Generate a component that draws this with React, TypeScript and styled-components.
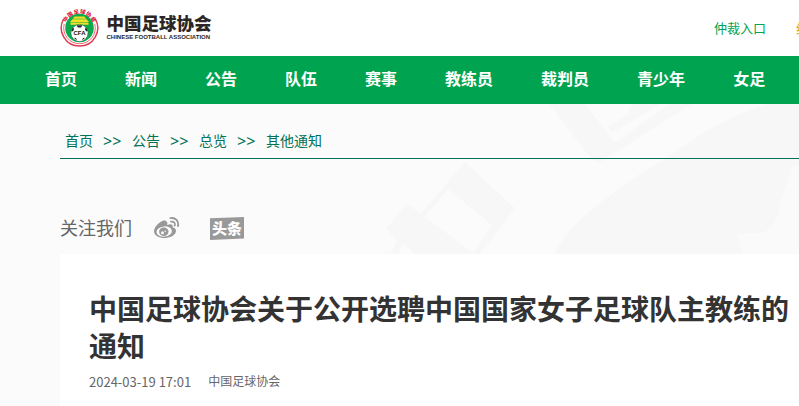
import React from "react";
import styled, { createGlobalStyle } from "styled-components";

const GlobalStyle = createGlobalStyle`
  * { box-sizing: border-box; }
  body {
    margin: 0;
    background: #fbfbfb;
    color: #333;
    font-family: "Noto Sans", "Noto Sans CJK SC", sans-serif;
    font-size: 14px;
    overflow-x: hidden;
  }
  a { color: inherit; text-decoration: none; }
`;

const Page = styled.div`
  min-height: 100vh;
  display: flex;
  flex-direction: column;
  overflow: hidden;
`;

const Header = styled.header`
  display: flex;
  align-items: center;
  justify-content: space-between;
  height: 56px;
  padding-left: 60px;
  background: #fff;
`;

const Brand = styled.a`
  display: flex;
  flex: none;
  svg { display: block; }
`;

const TopLinks = styled.nav`
  display: flex;
  flex: none;
  gap: 30px;
  width: 85px;
  font-size: 13px;
  line-height: 20px;
  white-space: nowrap;
`;

const TopLink = styled.a<{ $tone: string }>`
  flex: none;
  color: ${(p) => p.$tone};
`;

const MainNav = styled.nav`
  display: flex;
  height: 48px;
  padding-left: 21px;
  background: #00a450;
`;

const NavLink = styled.a`
  flex: none;
  padding: 0 24px;
  color: #fff;
  font-size: 16px;
  font-weight: 700;
  line-height: 46px;
`;

const Main = styled.main`
  position: relative;
  flex: 1;
  display: flex;
  flex-direction: column;
  padding-left: 60px;
`;

const Watermark = styled.svg`
  position: absolute;
  top: 0;
  left: 380px;
  width: 419px;
  height: 150px;
`;

const Breadcrumb = styled.nav`
  position: relative;
  display: flex;
  align-items: center;
  gap: 10px;
  height: 55px;
  padding: 20px 5px 0;
  border-bottom: 1px solid #007257;
  color: #007257;
  line-height: 20px;
`;

const Separator = styled.span`
  min-width: 19px;
  font-size: 16px;
`;

const Follow = styled.div`
  position: relative;
  display: flex;
  align-items: center;
  height: 95px;
  padding-top: 43px;
  color: #666;
  font-size: 18px;
  line-height: 24px;
`;

const SocialLink = styled.a<{ $gap: number }>`
  margin-left: ${(p) => p.$gap}px;
  svg { display: block; }
`;

const Article = styled.article`
  position: relative;
  flex: 1;
  padding: 37px 0 14px 29px;
  background: #fff;
`;

const Title = styled.h1`
  margin: 0;
  font-size: 28px;
  font-weight: 700;
  line-height: 37px;
`;

const Meta = styled.div`
  display: flex;
  align-items: center;
  gap: 17px;
  margin-top: 7px;
  color: #666;
  font-size: 12px;
  line-height: 20px;
`;

const Time = styled.time`
  font-family: "Noto Sans CJK SC", sans-serif;
  font-size: 13px;
`;

const ringText = Array.from("中国足球协会");

function Logo() {
  return (
    <svg width="152" height="40" viewBox="0 0 152 40" role="img" aria-label="中国足球协会">
      <path d="M3.600 11A18.200 18.200 0 1 0 35.400 11" fill="none" stroke="#e23a52" strokeWidth="1.500" />
      <path d="M4.200 16A15.800 15.800 0 1 0 34.800 16" fill="none" stroke="#ea6a7b" strokeWidth="1" />
      {ringText.map((ch, i) => (
        <text
          key={ch}
          x="19.500"
          y="5.600"
          textAnchor="middle"
          fontFamily="Noto Sans CJK SC, sans-serif"
          fontSize="5.500"
          fontWeight="900"
          fill="#dc1f3c"
          transform={`rotate(${-57.5 + i * 23} 19.5 20)`}
        >
          {ch}
        </text>
      ))}
      <circle cx="19.500" cy="20" r="14.300" fill="#0ba84c" />
      <path d="M14.500 8.600h10l1.600 2.200h-13.200zM12.500 11.300h14l2.500 2.700h-19zM10.500 14.600h18v2.200h-18z" fill="#f0e126" />
      <circle cx="19.500" cy="25" r="8.600" fill="#fff" stroke="#176b3c" strokeWidth=".6" />
      <path d="M16.800 17.200h5.400l-1 2.300h-3.400zM11.300 22.500l1.800-3 1 1.500-1.200 2.500zM27.700 22.500l-1.800-3-1 1.500 1.200 2.500zM14 29.800l2 .2 1 2.700zM25 29.800l-2 .2-1 2.700z" fill="#222" />
      <text x="19.500" y="27.300" textAnchor="middle" fontFamily="Liberation Sans, sans-serif" fontSize="6" fontWeight="700" fill="#111">CFA</text>
      <text x="46.500" y="21.500" fontFamily="Noto Sans CJK SC, sans-serif" fontSize="17.500" fontWeight="900" fill="#2b2523">中国足球协会</text>
      <text x="46.500" y="31" fontFamily="Liberation Sans, sans-serif" fontSize="6" fontWeight="700" fill="#2b2523">CHINESE FOOTBALL ASSOCIATION</text>
    </svg>
  );
}

function WeiboIcon() {
  return (
    <svg width="26" height="22" viewBox="0 0 26 22" fill="none" aria-hidden="true">
      <path d="M10 3.500C7 3.500 0 9.500 0 14.200 0 18.500 5 21 10.500 21c7 0 11.500-3.800 11.500-7 0-2-1.500-3.200-3.400-3.700.7-2.300-.8-4.200-5.400-2.300C14 5 12.500 3.500 10 3.500z" fill="#999" />
      <ellipse cx="10.200" cy="14.500" rx="7.700" ry="5.100" fill="#fbfbfb" transform="rotate(-6 10.200 14.500)" />
      <ellipse cx="9.800" cy="14.800" rx="4.700" ry="4.200" fill="#999" />
      <circle cx="8.500" cy="15.800" r="1.500" fill="#fbfbfb" />
      <circle cx="11.300" cy="14.200" r=".7" fill="#fbfbfb" />
      <path d="M16.500 1.200c4.800-1 8.800 3 7.400 8M17 4.700c2.500-.6 4.500 1.400 3.700 3.900" stroke="#999" strokeWidth="1.800" strokeLinecap="round" />
    </svg>
  );
}

function ToutiaoIcon() {
  return (
    <svg width="34" height="23" viewBox="0 0 34 23" aria-hidden="true">
      <path d="M0 1.200L34 0v21.500L0 23z" fill="#999" />
      <text x="17" y="17" textAnchor="middle" fontFamily="Noto Sans CJK SC, sans-serif" fontSize="15" fontWeight="900" fill="#fff">头条</text>
    </svg>
  );
}

const navItems = ["首页", "新闻", "公告", "队伍", "赛事", "教练员", "裁判员", "青少年", "女足"];
const crumbs = ["首页", "公告", "总览", "其他通知"];

export default function App() {
  return (
    <Page lang="zh-CN">
      <GlobalStyle />
      <Header>
        <Brand href="#home"><Logo /></Brand>
        <TopLinks aria-label="快捷入口">
          <TopLink href="#arbitration" $tone="#00a450">仲裁入口</TopLink>
          <TopLink href="#discipline" $tone="#e0a82e">纪律</TopLink>
        </TopLinks>
      </Header>
      <MainNav aria-label="主导航">
        {navItems.map((item) => <NavLink key={item} href="#nav">{item}</NavLink>)}
      </MainNav>
      <Main>
        <Watermark viewBox="0 12 1257 450" preserveAspectRatio="none" fill="#f7f7f7" aria-hidden="true">
          <path d="M508 12H615L705 128L870 12H935L705 158L655 190L625 165ZM755 12L745 42L683 82L697 98L840 12Z" />
          <path d="M1160 12Q1030 55 930 125T800 210T660 310T525 462H1257V12Z" />
          <path fillRule="evenodd" d="M255 185L405 325L300 462H30L50 425L20 385L80 310L122 342ZM205 268L335 375L280 460L135 350ZM70 430L105 462H55Z" />
          <path d="M1235 200L1257 195V462H1090L1070 400H1145Q1190 380 1197 325Z" fill="#fafafa" />
        </Watermark>
        <Breadcrumb aria-label="面包屑">
          {crumbs.map((item, i) => (
            <React.Fragment key={item}>
              {i > 0 && <Separator>&gt;&gt;</Separator>}
              <a href="#crumb">{item}</a>
            </React.Fragment>
          ))}
        </Breadcrumb>
        <Follow>
          <span>关注我们</span>
          <SocialLink href="#weibo" aria-label="微博" $gap={22}><WeiboIcon /></SocialLink>
          <SocialLink href="#toutiao" aria-label="头条" $gap={30}><ToutiaoIcon /></SocialLink>
        </Follow>
        <Article>
          <Title>中国足球协会关于公开选聘中国国家女子足球队主教练的通知</Title>
          <Meta>
            <Time dateTime="2024-03-19T17:01">2024-03-19 17:01</Time>
            <span>中国足球协会</span>
          </Meta>
        </Article>
      </Main>
    </Page>
  );
}
